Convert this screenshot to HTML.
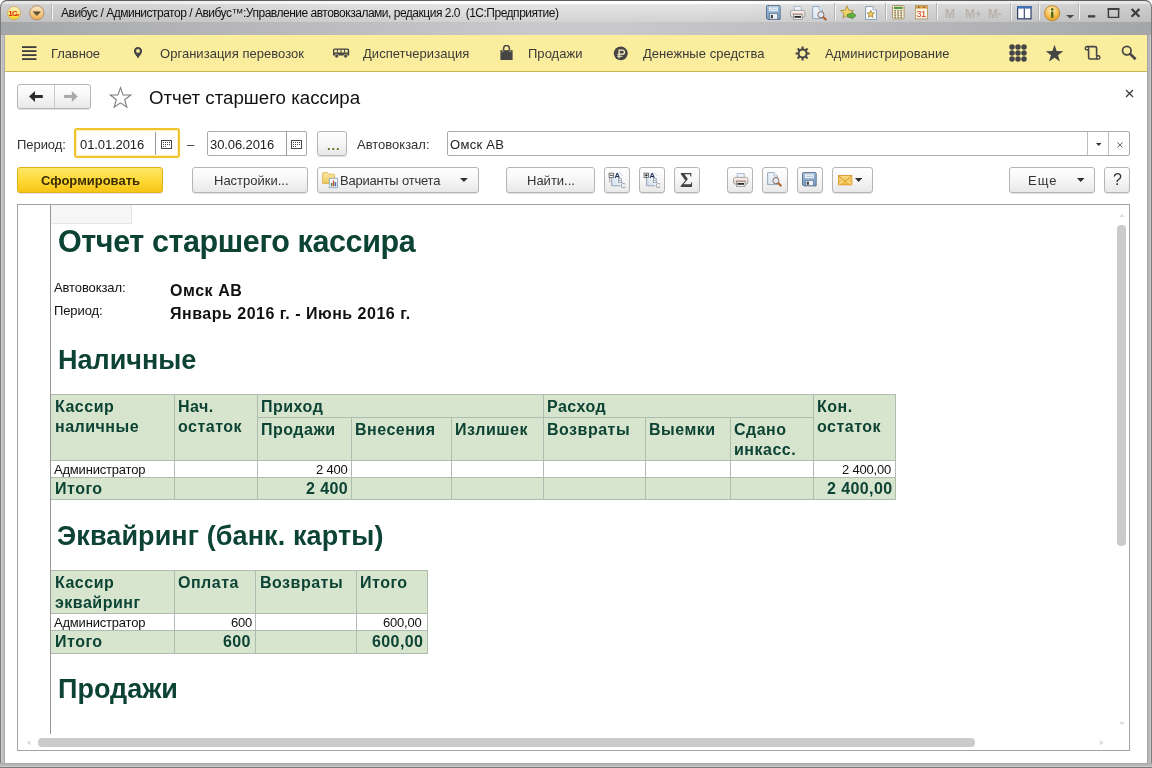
<!DOCTYPE html>
<html lang="ru">
<head>
<meta charset="utf-8">
<title>Отчет старшего кассира</title>
<style>
*{box-sizing:border-box;margin:0;padding:0}
html,body{width:1152px;height:768px;overflow:hidden;background:#fff}
body{font-family:"Liberation Sans",sans-serif;font-size:12px;color:#222;position:relative}
.abs{position:absolute}
svg{will-change:transform}
.t{position:absolute;white-space:nowrap;line-height:1;will-change:transform}
#frame{left:0;top:0;width:1152px;height:768px;background:#b9babc;border-radius:7px 7px 0 0}
#titlebar{left:0;top:0;width:1152px;height:35px;border-radius:7px 7px 0 0;border-top:1px solid #5e5e5e;border-left:1px solid #7c7c7c;border-right:1px solid #7c7c7c;
 background:linear-gradient(90deg,rgba(90,90,95,0.16) 0,rgba(90,90,95,0) 40%,rgba(90,90,95,0) 60%,rgba(90,90,95,0.16) 100%) 0 0/100% 21px no-repeat,linear-gradient(#ffffff 0,#ffffff 3px,#e5e5e5 3.5px,#d2d2d3 21px,rgba(210,210,211,0) 21px),linear-gradient(90deg,#a4a5a7 0,#adaeb0 8%,#c9c9cb 46%,#c9c9cb 54%,#adaeb0 92%,#a4a5a7 100%)}
#edgeL{left:0;top:35px;width:5px;height:733px;background:linear-gradient(90deg,#7a7a7a 0,#7a7a7a 1px,#cdcdcd 1px,#cdcdcd 2px,#bdbdbd 2px,#bdbdbd 4px,#adadad 4px,#adadad 5px)}
#edgeR{left:1147px;top:35px;width:5px;height:733px;background:linear-gradient(90deg,#a8a8a8 0,#a8a8a8 1px,#b7b7b9 1px,#b7b7b9 3px,#cbcbcd 3px,#cbcbcd 4px,#7a7a7c 4px,#7a7a7c 5px)}
#edgeB{left:0;top:763px;width:1152px;height:5px;background:linear-gradient(#a8a8a8 0,#a8a8a8 1px,#b7b7b9 1px,#b7b7b9 3px,#cbcbcd 3px,#cbcbcd 4px,#7a7a7c 4px,#7a7a7c 5px)}
#menubar{left:5px;top:35px;width:1142px;height:37px;background:#fbed9e;border-bottom:1px solid #c9b64f}
#content{left:5px;top:72px;width:1142px;height:691px;background:#fff}
.mi{color:#3a3a3a}
.inp{position:absolute;background:#fff;border:1px solid #a9a9a9;border-radius:2px}
.btn{position:absolute;border:1px solid #b5b5b5;border-radius:3px;background:linear-gradient(#ffffff,#f6f6f6 50%,#e8e8e8);box-shadow:0 1px 0 #e2e2e2}
.g{color:#0c4334;font-weight:bold}
.hc{position:absolute;background:#d7e5ce}
.ln{position:absolute;background:#aebdb0}
</style>
</head>
<body>
<div id="frame" class="abs"></div>
<div id="titlebar" class="abs"></div>
<div id="edgeL" class="abs"></div>
<div id="edgeR" class="abs"></div>
<div id="edgeB" class="abs"></div>
<div id="menubar" class="abs"></div>
<div id="content" class="abs"></div>
<!-- TITLEBAR -->
<div class="t" style="top:6px;font-size:12px;line-height:14px;left:61px;color:#111;letter-spacing:-0.49px;">Авибус / Администратор / Авибус™:Управление автовокзалами, редакция 2.0&nbsp; (1С:Предприятие)</div>
<!-- MENUBAR -->
<div class="t mi" style="top:46px;font-size:13px;line-height:15px;left:51px;letter-spacing:-0.1px;">Главное</div>
<div class="t mi" style="top:46px;font-size:13px;line-height:15px;left:160px;letter-spacing:0.03px;">Организация перевозок</div>
<div class="t mi" style="top:46px;font-size:13px;line-height:15px;left:363px;letter-spacing:0.03px;">Диспетчеризация</div>
<div class="t mi" style="top:46px;font-size:13px;line-height:15px;left:528px;letter-spacing:0.03px;">Продажи</div>
<div class="t mi" style="top:46px;font-size:13px;line-height:15px;left:643px;letter-spacing:0.03px;">Денежные средства</div>
<div class="t mi" style="top:46px;font-size:13px;line-height:15px;left:825px;letter-spacing:0.03px;">Администрирование</div>
<!-- HEADER -->
<div class="btn" style="left:17px;top:84px;width:74px;height:25px;border-radius:3px"></div>
<div class="abs" style="left:54px;top:85px;width:1px;height:23px;background:#c8c8c8"></div>
<div class="t" style="top:87px;font-size:18.7px;line-height:21px;left:149px;color:#111;">Отчет старшего кассира</div>
<svg class="abs" style="left:22px;top:45px" width="15" height="16" viewBox="0 0 15 16" preserveAspectRatio="none"><rect x="0" y="1.2" width="14.5" height="1.8" fill="#3d3d3d"/><rect x="0" y="5.2" width="14.5" height="1.8" fill="#3d3d3d"/><rect x="0" y="9.2" width="14.5" height="1.8" fill="#3d3d3d"/><rect x="0" y="13.2" width="14.5" height="1.8" fill="#3d3d3d"/></svg>
<svg class="abs" style="left:132px;top:46px" width="12" height="14" viewBox="0 0 12 14" preserveAspectRatio="none"><path fill-rule="evenodd" fill="#454545" d="M6 1 C3.6 1 1.9 2.8 1.9 5 C1.9 7.6 4.6 10 6 12.4 C7.4 10 10.1 7.6 10.1 5 C10.1 2.8 8.4 1 6 1 Z M6 3 A1.9 1.9 0 1 1 6 6.8 A1.9 1.9 0 1 1 6 3 Z"/></svg>
<svg class="abs" style="left:333px;top:48px" width="17" height="11" viewBox="0 0 17 11" preserveAspectRatio="none"><path fill="#454545" d="M1.6 0.4 H14.6 Q16.2 0.4 16.2 2 V7.6 H0 V2 Q0 0.4 1.6 0.4 Z"/><rect x="1.3" y="1.8" width="2.6" height="2.7" fill="#fbed9e"/><rect x="4.9" y="1.8" width="2.6" height="2.7" fill="#fbed9e"/><rect x="8.5" y="1.8" width="2.6" height="2.7" fill="#fbed9e"/><rect x="12.1" y="1.8" width="2.6" height="2.7" fill="#fbed9e"/><circle cx="3.6" cy="8" r="1.9" fill="#454545" stroke="#fbed9e" stroke-width="0.6"/><circle cx="12.6" cy="8" r="1.9" fill="#454545" stroke="#fbed9e" stroke-width="0.6"/></svg>
<svg class="abs" style="left:500px;top:44.6px" width="13" height="16" viewBox="0 0 13 16" preserveAspectRatio="none"><path fill="#454545" d="M0.4 5.2 H12.6 V15 H0.4 Z"/><path fill="none" stroke="#454545" stroke-width="1.5" d="M3.6 6 V3.4 A2.9 2.9 0 0 1 9.4 3.4 V6"/><path fill="none" stroke="#fbed9e" stroke-width="0.7" d="M2.9 5.2 V7.2 M10.1 5.2 V7.2"/></svg>
<svg class="abs" style="left:613.3px;top:45.5px" width="15" height="15" viewBox="0 0 15 15" preserveAspectRatio="none"><circle cx="7.75" cy="7.35" r="6.95" fill="#454545"/><path fill="none" stroke="#fdf4c6" stroke-width="1.25" d="M6.1 12.3 V4.1 H9.4 A2.05 2.05 0 0 1 9.4 8.2 H6.1"/><path fill="none" stroke="#fdf4c6" stroke-width="0.95" d="M4.2 8.3 H6.1 M4.2 10.3 H9.4"/></svg>
<svg class="abs" style="left:795.3px;top:45.5px" width="15.4" height="15.4" viewBox="0 0 15.4 15.4" preserveAspectRatio="none"><path fill-rule="evenodd" fill="#454545" d="M2.5999999999999996 7.55 a5 5 0 1 0 10 0 a5 5 0 1 0 -10 0 Z M4.55 7.55 a3.05 3.05 0 1 1 6.1 0 a3.05 3.05 0 1 1 -6.1 0 Z"/><rect x="6.55" y="0.5" width="2.1" height="2.8" rx="0.3" fill="#454545" transform="rotate(0 7.6 7.55)"/><rect x="6.55" y="0.5" width="2.1" height="2.8" rx="0.3" fill="#454545" transform="rotate(45 7.6 7.55)"/><rect x="6.55" y="0.5" width="2.1" height="2.8" rx="0.3" fill="#454545" transform="rotate(90 7.6 7.55)"/><rect x="6.55" y="0.5" width="2.1" height="2.8" rx="0.3" fill="#454545" transform="rotate(135 7.6 7.55)"/><rect x="6.55" y="0.5" width="2.1" height="2.8" rx="0.3" fill="#454545" transform="rotate(180 7.6 7.55)"/><rect x="6.55" y="0.5" width="2.1" height="2.8" rx="0.3" fill="#454545" transform="rotate(225 7.6 7.55)"/><rect x="6.55" y="0.5" width="2.1" height="2.8" rx="0.3" fill="#454545" transform="rotate(270 7.6 7.55)"/><rect x="6.55" y="0.5" width="2.1" height="2.8" rx="0.3" fill="#454545" transform="rotate(315 7.6 7.55)"/></svg>
<svg class="abs" style="left:1008.6px;top:43.6px" width="18" height="18" viewBox="0 0 18 18" preserveAspectRatio="none"><circle cx="3" cy="3" r="2.75" fill="#454545"/><circle cx="3" cy="9" r="2.75" fill="#454545"/><circle cx="3" cy="15" r="2.75" fill="#454545"/><circle cx="9" cy="3" r="2.75" fill="#454545"/><circle cx="9" cy="9" r="2.75" fill="#454545"/><circle cx="9" cy="15" r="2.75" fill="#454545"/><circle cx="15" cy="3" r="2.75" fill="#454545"/><circle cx="15" cy="9" r="2.75" fill="#454545"/><circle cx="15" cy="15" r="2.75" fill="#454545"/></svg>
<svg class="abs" style="left:1045px;top:44px" width="19" height="18" viewBox="0 0 19 18" preserveAspectRatio="none"><path fill="#454545" d="M9.50 0.80 L11.67 7.01 L18.25 7.16 L13.02 11.14 L14.91 17.44 L9.50 13.70 L4.09 17.44 L5.98 11.14 L0.75 7.16 L7.33 7.01 Z"/></svg>
<svg class="abs" style="left:1083.5px;top:44.5px" width="17" height="16" viewBox="0 0 17 16" preserveAspectRatio="none"><path fill="none" stroke="#454545" stroke-width="1.6" stroke-linejoin="round" d="M3.2 4.7 H4.6 V12.4 Q4.6 14 6.2 14 H14 M3.2 1.6 H11 Q12.6 1.6 12.6 3.2 V11"/><circle cx="3" cy="3.2" r="1.7" fill="none" stroke="#454545" stroke-width="1.4"/><circle cx="14.2" cy="12.4" r="1.7" fill="none" stroke="#454545" stroke-width="1.4"/></svg>
<svg class="abs" style="left:1120.5px;top:45.3px" width="16" height="16" viewBox="0 0 16 16" preserveAspectRatio="none"><circle cx="5.8" cy="5.6" r="4.3" fill="none" stroke="#454545" stroke-width="1.7"/><path stroke="#454545" stroke-width="2.6" stroke-linecap="butt" d="M9 8.8 L14.6 14.2"/></svg>
<svg class="abs" style="left:29.2px;top:91px" width="50" height="11" viewBox="0 0 50 11" preserveAspectRatio="none"><path fill="#2d2d2d" d="M0 5.5 L6 0 V3.9 H13.8 V7.1 H6 V11 Z"/><path fill="#a9a9a9" d="M48.8 5.5 L42.8 0 V3.9 H35 V7.1 H42.8 V11 Z"/></svg>
<svg class="abs" style="left:108px;top:85px" width="25" height="24" viewBox="0 0 25 24" preserveAspectRatio="none"><path fill="#fff" stroke="#7d7d7d" stroke-width="1.1" stroke-linejoin="miter" d="M12.50 2.60 L15.09 9.84 L22.77 10.06 L16.68 14.76 L18.85 22.14 L12.50 17.80 L6.15 22.14 L8.32 14.76 L2.23 10.06 L9.91 9.84 Z"/></svg>
<svg class="abs" style="left:1125px;top:89px" width="9" height="9" viewBox="0 0 9 9" preserveAspectRatio="none"><path stroke="#3a3a3a" stroke-width="1.25" d="M1 1 L8 8 M8 1 L1 8"/></svg>
<svg class="abs" style="left:6.9px;top:6px" width="14" height="14" viewBox="0 0 14 14" preserveAspectRatio="none"><defs><linearGradient id="c1g" x1="0" y1="0" x2="0" y2="1"><stop offset="0" stop-color="#fff6c0"/><stop offset="0.55" stop-color="#fbe878"/><stop offset="1" stop-color="#f5d800"/></linearGradient></defs><circle cx="7" cy="7" r="6.5" fill="url(#c1g)" stroke="#d6a75c" stroke-width="0.9"/><text x="1.6" y="9.5" font-family="Liberation Sans, sans-serif" font-size="7.4" font-weight="700" fill="#d81e05" letter-spacing="-0.7">1С</text><path stroke="#d81e05" stroke-width="1.2" d="M8.4 8.9 H12"/></svg>
<svg class="abs" style="left:29px;top:5.2px" width="16" height="16" viewBox="0 0 16 16" preserveAspectRatio="none"><defs><linearGradient id="tdg" x1="0" y1="0" x2="0" y2="1"><stop offset="0" stop-color="#fbe6c8"/><stop offset="0.5" stop-color="#f6cd90"/><stop offset="1" stop-color="#efab48"/></linearGradient><linearGradient id="tdt" x1="0" y1="0" x2="0" y2="1"><stop offset="0" stop-color="#4e4230"/><stop offset="1" stop-color="#8a6e3c"/></linearGradient></defs><circle cx="7.8" cy="7.8" r="7.1" fill="url(#tdg)" stroke="#ab8a62" stroke-width="0.9"/><path fill="url(#tdt)" d="M3.7 6.6 H11.9 L7.8 11.2 Z"/></svg>
<div class="abs" style="left:51px;top:3px;width:2px;height:17px;background:linear-gradient(90deg,#b4b4b4 50%,#f4f4f4 50%)"></div>
<svg class="abs" style="left:766px;top:5px" width="15" height="15" viewBox="0 0 15 14.5" preserveAspectRatio="none"><defs><linearGradient id="flgt" x1="0" y1="0" x2="0" y2="1"><stop offset="0" stop-color="#a3bedb"/><stop offset="1" stop-color="#7398c0"/></linearGradient></defs><path fill="url(#flgt)" stroke="#586f8a" stroke-width="0.9" d="M1.4 0.5 H13.2 Q14.2 0.5 14.2 1.5 V13.9 H1.6 L0.5 12.8 V1.5 Q0.5 0.5 1.4 0.5 Z"/><rect x="2.7" y="1.2" width="9.3" height="5.2" fill="#f0f5fa" stroke="#8aa5c2" stroke-width="0.5"/><path stroke="#9db6d2" stroke-width="0.7" d="M3.9 2.7 H10.8 M3.9 4.6 H10.8"/><rect x="3.6" y="8.4" width="7.8" height="5.3" fill="#eef0f3" stroke="#5b7189" stroke-width="0.6"/><rect x="4.8" y="9.6" width="2.1" height="3.2" fill="#3b4148"/></svg>
<svg class="abs" style="left:790px;top:6px" width="16" height="14" viewBox="0 0 16 14" preserveAspectRatio="none"><defs><linearGradient id="prgt" x1="0" y1="0" x2="0" y2="1"><stop offset="0" stop-color="#fbfaf9"/><stop offset="1" stop-color="#d9d5d1"/></linearGradient></defs><path fill="#eef4fb" stroke="#9db1c8" stroke-width="0.8" d="M4.2 0.5 H11.2 V5.4 H4.2 Z"/><rect x="0.5" y="4.4" width="14.4" height="6.8" rx="2" fill="url(#prgt)" stroke="#a3958d" stroke-width="0.9"/><rect x="2.2" y="6.9" width="11" height="1.1" fill="#e3b3a6"/><rect x="3.4" y="8.5" width="8.6" height="4.8" fill="#fdfdfd" stroke="#8d8580" stroke-width="0.8"/><rect x="4.4" y="9.9" width="6.6" height="1.9" fill="#2b2b2b"/></svg>
<svg class="abs" style="left:812.3px;top:5.6px" width="15.5" height="15" viewBox="0 0 15.5 15" preserveAspectRatio="none"><defs><linearGradient id="pvgt" x1="1" y1="0" x2="0" y2="1"><stop offset="0" stop-color="#ffffff"/><stop offset="1" stop-color="#d5e3f1"/></linearGradient></defs><path fill="url(#pvgt)" stroke="#8aa0ba" stroke-width="0.9" d="M0.6 0.6 H7 L10.4 4 V12.6 H0.6 Z"/><path fill="#f3f7fb" stroke="#8aa0ba" stroke-width="0.7" d="M7 0.6 V4 H10.4"/><circle cx="8.9" cy="8.7" r="3.1" fill="#dbe8f5" stroke="#8c6a55" stroke-width="1"/><path stroke="#b0602c" stroke-width="2.2" stroke-linecap="round" d="M11.6 11.5 L13.7 13.5"/></svg>
<div class="abs" style="left:834px;top:3px;width:2px;height:17px;background:linear-gradient(90deg,#b4b4b4 50%,#f4f4f4 50%)"></div>
<svg class="abs" style="left:840px;top:5px" width="17" height="15" viewBox="0 0 17 15" preserveAspectRatio="none"><path fill="#f3d36b" stroke="#a98f3f" stroke-width="0.9" d="M7.00 0.80 L8.76 5.17 L13.47 5.50 L9.85 8.53 L11.00 13.10 L7.00 10.60 L3.00 13.10 L4.15 8.53 L0.53 5.50 L5.24 5.17 Z"/><path fill="#5fb642" stroke="#3c7f28" stroke-width="0.7" d="M7.6 9 H12 V7.2 L16 10.6 L12 14 V12.2 H7.6 Z"/></svg>
<svg class="abs" style="left:865px;top:5.6px" width="12" height="14" viewBox="0 0 12 14" preserveAspectRatio="none"><path fill="#fafcfe" stroke="#7f95ae" stroke-width="0.9" d="M0.6 0.6 H8 L11.4 4 V13.4 H0.6 Z"/><path fill="#e6eef6" stroke="#7f95ae" stroke-width="0.7" d="M8 0.6 V4 H11.4"/><path fill="#f0cc62" stroke="#9a8238" stroke-width="0.8" d="M5.80 4.30 L6.80 6.82 L9.51 6.99 L7.42 8.73 L8.09 11.36 L5.80 9.90 L3.51 11.36 L4.18 8.73 L2.09 6.99 L4.80 6.82 Z"/></svg>
<div class="abs" style="left:885px;top:3px;width:2px;height:17px;background:linear-gradient(90deg,#b4b4b4 50%,#f4f4f4 50%)"></div>
<svg class="abs" style="left:892px;top:5.4px" width="13" height="14.5" viewBox="0 0 13 14.5" preserveAspectRatio="none"><rect x="0.5" y="0.5" width="11.6" height="13.4" rx="1" fill="#f4ead0" stroke="#a78f5f" stroke-width="0.9"/><rect x="2" y="1.8" width="8.6" height="2.2" fill="#4f9a3e"/><rect x="2.3" y="5.3" width="1.7" height="1" fill="#5d4d30"/><rect x="2.3" y="7.449999999999999" width="1.7" height="1" fill="#5d4d30"/><rect x="2.3" y="9.6" width="1.7" height="1" fill="#5d4d30"/><rect x="2.3" y="11.75" width="1.7" height="1" fill="#5d4d30"/><rect x="5.3" y="5.3" width="1.7" height="1" fill="#5d4d30"/><rect x="5.3" y="7.449999999999999" width="1.7" height="1" fill="#5d4d30"/><rect x="5.3" y="9.6" width="1.7" height="1" fill="#5d4d30"/><rect x="5.3" y="11.75" width="1.7" height="1" fill="#5d4d30"/><rect x="8.3" y="5.3" width="1.7" height="1" fill="#5d4d30"/><rect x="8.3" y="7.449999999999999" width="1.7" height="1" fill="#5d4d30"/><rect x="8.3" y="9.6" width="1.7" height="1" fill="#5d4d30"/><rect x="8.3" y="11.75" width="1.7" height="1" fill="#5d4d30"/></svg>
<svg class="abs" style="left:915px;top:5.4px" width="13" height="14.5" viewBox="0 0 13 14.5" preserveAspectRatio="none"><rect x="0.5" y="0.5" width="12" height="13.4" fill="#fdf6e6" stroke="#b59a62" stroke-width="0.9"/><rect x="1" y="1" width="11" height="2.6" fill="#d7a04c"/><rect x="3" y="1.6" width="1.4" height="1.2" fill="#7a4a16"/><rect x="8.6" y="1.6" width="1.4" height="1.2" fill="#7a4a16"/><text x="1.3" y="12.4" font-family="Liberation Sans, sans-serif" font-size="9.4" fill="#d33a1e" letter-spacing="-0.6">31</text></svg>
<div class="abs" style="left:936px;top:3px;width:2px;height:17px;background:linear-gradient(90deg,#b4b4b4 50%,#f4f4f4 50%)"></div>
<div class="t" style="top:7px;font-size:12px;line-height:14px;left:945px;font-weight:700;color:#b9b2aa;letter-spacing:-0.3px;">M</div>
<div class="t" style="top:7px;font-size:12px;line-height:14px;left:965px;font-weight:700;color:#b9b2aa;letter-spacing:-0.3px;">M+</div>
<div class="t" style="top:7px;font-size:12px;line-height:14px;left:988px;font-weight:700;color:#b9b2aa;letter-spacing:-0.3px;">M-</div>
<div class="abs" style="left:1010px;top:3px;width:2px;height:17px;background:linear-gradient(90deg,#b4b4b4 50%,#f4f4f4 50%)"></div>
<svg class="abs" style="left:1017.3px;top:6.2px" width="15" height="13.5" viewBox="0 0 15 13.5" preserveAspectRatio="none"><rect x="0.6" y="0.6" width="13.4" height="12.2" fill="#fff" stroke="#2a3f66" stroke-width="1.2"/><rect x="0" y="0" width="14.6" height="2.6" fill="#3f6fb3"/><path stroke="#2a3f66" stroke-width="1.1" d="M7.3 2.6 V12.8"/></svg>
<div class="abs" style="left:1038px;top:3px;width:2px;height:17px;background:linear-gradient(90deg,#b4b4b4 50%,#f4f4f4 50%)"></div>
<svg class="abs" style="left:1043.8px;top:4.8px" width="16.5" height="16.5" viewBox="0 0 16.5 16.5" preserveAspectRatio="none"><defs><radialGradient id="ing" cx="0.45" cy="0.3" r="0.8"><stop offset="0" stop-color="#fff0c8"/><stop offset="0.5" stop-color="#f6c052"/><stop offset="1" stop-color="#e39413"/></radialGradient></defs><circle cx="8.2" cy="8.2" r="7.6" fill="url(#ing)" stroke="#b98731" stroke-width="0.9"/><circle cx="8.2" cy="4.4" r="1.3" fill="#4c6a12"/><rect x="7" y="6.6" width="2.4" height="6.2" fill="#4c6a12"/></svg>
<svg class="abs" style="left:1066px;top:15px" width="8.2" height="4.1" viewBox="0 0 8.2 4.1" preserveAspectRatio="none"><path fill="#4a4a4a" d="M0 0 H8.2 L4.1 3.6 Z"/></svg>
<div class="abs" style="left:1078px;top:3px;width:2px;height:17px;background:linear-gradient(90deg,#b4b4b4 50%,#f4f4f4 50%)"></div>
<svg class="abs" style="left:1088px;top:7.8px" width="53" height="10" viewBox="0 0 53 10" preserveAspectRatio="none"><rect x="0" y="7.2" width="7.2" height="2.3" fill="#3e3e3e"/><rect x="20.4" y="0.9" width="10.2" height="8.6" fill="none" stroke="#3e3e3e" stroke-width="1.5"/><rect x="19.7" y="0" width="11.6" height="2" fill="#3e3e3e"/><path stroke="#3e3e3e" stroke-width="2.3" d="M43.6 1 L51.4 8.8 M51.4 1 L43.6 8.8"/></svg>
<!-- FORM -->
<div class="t" style="top:137px;font-size:13px;line-height:15px;left:17px;color:#333;letter-spacing:-0.05px;">Период:</div>
<div class="abs" style="left:74px;top:128px;width:106px;height:30px;border:2px solid #f1c42f;border-radius:3px;background:#fff;box-shadow:inset 0 0 0 1px #fff3c2"></div>
<div class="t" style="top:137px;font-size:13px;line-height:15px;left:80px;color:#222;letter-spacing:-0.1px;">01.01.2016</div>
<div class="abs" style="left:155px;top:132px;width:1px;height:23px;background:#9a9a9a"></div>
<svg class="abs" style="left:161px;top:140px" width="11" height="9" viewBox="0 0 11 9" preserveAspectRatio="none"><rect x="0.5" y="0.5" width="10" height="8" fill="#fff" stroke="#484848" stroke-width="1"/><rect x="2" y="2" width="1" height="1" fill="#484848"/><rect x="4" y="2" width="1" height="1" fill="#484848"/><rect x="6" y="2" width="1" height="1" fill="#484848"/><rect x="8" y="2" width="1" height="1" fill="#484848"/><rect x="2" y="4" width="1" height="1" fill="#484848"/><rect x="4" y="4" width="1" height="1" fill="#484848"/><rect x="6" y="4" width="1" height="1" fill="#484848"/><rect x="8" y="4" width="1" height="1" fill="#484848"/><rect x="2" y="6" width="1" height="1" fill="#484848"/><rect x="4" y="6" width="1" height="1" fill="#484848"/></svg>
<div class="t" style="top:137px;font-size:13px;line-height:15px;left:187px;color:#333;">–</div>
<div class="inp" style="left:207px;top:131px;width:100px;height:25px;"></div>
<div class="t" style="top:137px;font-size:13px;line-height:15px;left:210px;color:#222;letter-spacing:-0.1px;">30.06.2016</div>
<div class="abs" style="left:286px;top:132px;width:1px;height:23px;background:#9a9a9a"></div>
<svg class="abs" style="left:291px;top:140px" width="11" height="9" viewBox="0 0 11 9" preserveAspectRatio="none"><rect x="0.5" y="0.5" width="10" height="8" fill="#fff" stroke="#484848" stroke-width="1"/><rect x="2" y="2" width="1" height="1" fill="#484848"/><rect x="4" y="2" width="1" height="1" fill="#484848"/><rect x="6" y="2" width="1" height="1" fill="#484848"/><rect x="8" y="2" width="1" height="1" fill="#484848"/><rect x="2" y="4" width="1" height="1" fill="#484848"/><rect x="4" y="4" width="1" height="1" fill="#484848"/><rect x="6" y="4" width="1" height="1" fill="#484848"/><rect x="8" y="4" width="1" height="1" fill="#484848"/><rect x="2" y="6" width="1" height="1" fill="#484848"/><rect x="4" y="6" width="1" height="1" fill="#484848"/></svg>
<div class="btn" style="left:317px;top:131px;width:30px;height:25px;"></div>
<div class="t" style="top:138px;font-size:13px;line-height:15px;left:326.5px;font-weight:700;color:#6b6b1e;letter-spacing:0.9px;">...</div>
<div class="t" style="top:137px;font-size:13px;line-height:15px;left:357px;color:#333;">Автовокзал:</div>
<div class="inp" style="left:447px;top:131px;width:683px;height:25px;"></div>
<div class="t" style="top:137px;font-size:13px;line-height:15px;left:450px;color:#222;letter-spacing:0.3px;">Омск АВ</div>
<div class="abs" style="left:1087px;top:132px;width:1px;height:23px;background:#bdbdbd"></div>
<div class="abs" style="left:1108px;top:132px;width:1px;height:23px;background:#bdbdbd"></div>
<svg class="abs" style="left:1096px;top:143px" width="5.4" height="3.5" viewBox="0 0 5.4 3.5" preserveAspectRatio="none"><path fill="#333" d="M0 0 H5.4 L2.7 3 Z"/></svg>
<svg class="abs" style="left:1116.5px;top:141.8px" width="6" height="6" viewBox="0 0 6 6" preserveAspectRatio="none"><path stroke="#555" stroke-width="0.9" d="M0.4 0.4 L5.6 5.6 M5.6 0.4 L0.4 5.6"/></svg>
<div class="abs" style="left:17px;top:167px;width:146px;height:26px;border:1px solid #e0b01c;border-radius:3px;background:linear-gradient(#ffe868,#fdd835 55%,#f6c414);box-shadow:0 1px 0 #e5e5e5"></div>
<div class="t" style="top:173px;font-size:13px;line-height:15px;left:41px;font-weight:700;color:#3b2d00;">Сформировать</div>
<div class="btn" style="left:192px;top:167px;width:116px;height:26px;"></div>
<div class="t" style="top:173px;font-size:13px;line-height:15px;left:213.5px;color:#333;">Настройки...</div>
<div class="btn" style="left:317px;top:167px;width:162px;height:26px;"></div>
<div class="t" style="top:173px;font-size:13px;line-height:15px;left:340px;color:#333;letter-spacing:-0.2px;">Варианты отчета</div>
<svg class="abs" style="left:322px;top:171.6px" width="17" height="17" viewBox="0 0 17 17" preserveAspectRatio="none"><defs><linearGradient id="fg" x1="0" y1="0" x2="0" y2="1"><stop offset="0" stop-color="#fbe9a3"/><stop offset="1" stop-color="#efc95a"/></linearGradient></defs><path fill="url(#fg)" stroke="#d6ae45" stroke-width="0.8" d="M0.6 1.6 Q0.6 0.6 1.6 0.6 H5.2 L6.6 2.2 H11.6 Q12.6 2.2 12.6 3.2 V11.4 H0.6 Z"/><rect x="7.3" y="6.3" width="8.2" height="9.4" fill="#f4f8fc" stroke="#8fa6c0" stroke-width="0.9"/><rect x="8.9" y="11" width="1.5" height="3.3" fill="#4e8a3c"/><rect x="10.8" y="8.6" width="1.5" height="5.7" fill="#d0462f"/><rect x="12.7" y="10.2" width="1.5" height="4.1" fill="#3e6fb5"/></svg>
<svg class="abs" style="left:460.3px;top:178.3px" width="7.8" height="4.5" viewBox="0 0 7.8 4.5" preserveAspectRatio="none"><path fill="#2e2e2e" d="M0 0 H7.8 L3.9 4 Z"/></svg>
<div class="btn" style="left:506px;top:167px;width:89px;height:26px;"></div>
<div class="t" style="top:173px;font-size:13px;line-height:15px;left:527px;color:#333;">Найти...</div>
<div class="btn" style="left:604px;top:167px;width:26px;height:26px;"></div>
<div class="btn" style="left:639px;top:167px;width:26px;height:26px;"></div>
<div class="btn" style="left:674px;top:167px;width:26px;height:26px;"></div>
<div class="btn" style="left:727px;top:167px;width:26px;height:26px;"></div>
<div class="btn" style="left:762px;top:167px;width:26px;height:26px;"></div>
<div class="btn" style="left:797px;top:167px;width:26px;height:26px;"></div>
<svg class="abs" style="left:608px;top:171px" width="19" height="18" viewBox="0 0 19 18" preserveAspectRatio="none"><defs><linearGradient id="pg0" x1="1" y1="0" x2="0" y2="1"><stop offset="0" stop-color="#fbfdff"/><stop offset="1" stop-color="#cfdfee"/></linearGradient></defs><path fill="url(#pg0)" d="M3.6 1.2 H11 L14.6 4.8 V14.8 H3.6 Z"/><path fill="none" stroke="#8c9db2" stroke-width="0.9" d="M3.6 6.4 V14.8 H12"/><path fill="none" stroke="#c3d0de" stroke-width="0.8" d="M11 1.2 L14.6 4.8"/><rect x="1.1" y="2.2" width="4.4" height="4.2" fill="#fff" stroke="#555" stroke-width="0.8"/><path stroke="#222" stroke-width="0.9" d="M1.8 4.3 H4.8"/><path stroke="#8a8a8a" stroke-width="0.8" fill="none" d="M1.7 6.6 V11.4"/><text x="6.5" y="6.9" font-family="Liberation Sans, sans-serif" font-size="7.6" font-weight="700" fill="#1b2f4f">A</text><text x="9.7" y="12.3" font-family="Liberation Sans, sans-serif" font-size="7" fill="#7f858c">B</text><text x="12.6" y="17" font-family="Liberation Sans, sans-serif" font-size="7" fill="#7f858c">C</text></svg>
<svg class="abs" style="left:643px;top:171px" width="19" height="18" viewBox="0 0 19 18" preserveAspectRatio="none"><defs><linearGradient id="pg1" x1="1" y1="0" x2="0" y2="1"><stop offset="0" stop-color="#fbfdff"/><stop offset="1" stop-color="#cfdfee"/></linearGradient></defs><path fill="url(#pg1)" d="M3.6 1.2 H11 L14.6 4.8 V14.8 H3.6 Z"/><path fill="none" stroke="#8c9db2" stroke-width="0.9" d="M3.6 6.4 V14.8 H12"/><path fill="none" stroke="#c3d0de" stroke-width="0.8" d="M11 1.2 L14.6 4.8"/><rect x="1.1" y="2.2" width="4.4" height="4.2" fill="#fff" stroke="#555" stroke-width="0.8"/><path stroke="#222" stroke-width="0.9" d="M1.8 4.3 H4.8"/><path stroke="#222" stroke-width="0.9" d="M3.3 2.9 V5.7"/><text x="6.5" y="6.9" font-family="Liberation Sans, sans-serif" font-size="7.6" font-weight="700" fill="#1b2f4f">A</text><text x="9.7" y="12.3" font-family="Liberation Sans, sans-serif" font-size="7" fill="#7f858c">B</text><text x="12.6" y="17" font-family="Liberation Sans, sans-serif" font-size="7" fill="#7f858c">C</text></svg>
<div class="t" style="top:169px;font-size:20px;line-height:22px;left:680px;font-weight:700;color:#444;font-family:'Liberation Serif',serif;">Σ</div>
<svg class="abs" style="left:733px;top:172.8px" width="16" height="14" viewBox="0 0 16 14" preserveAspectRatio="none"><defs><linearGradient id="prg" x1="0" y1="0" x2="0" y2="1"><stop offset="0" stop-color="#fbfaf9"/><stop offset="1" stop-color="#d9d5d1"/></linearGradient></defs><path fill="#eef4fb" stroke="#9db1c8" stroke-width="0.8" d="M4.2 0.5 H11.2 V5.4 H4.2 Z"/><rect x="0.5" y="4.4" width="14.4" height="6.8" rx="2" fill="url(#prg)" stroke="#a3958d" stroke-width="0.9"/><rect x="2.2" y="6.9" width="11" height="1.1" fill="#e3b3a6"/><rect x="3.4" y="8.5" width="8.6" height="4.8" fill="#fdfdfd" stroke="#8d8580" stroke-width="0.8"/><rect x="4.4" y="9.9" width="6.6" height="1.9" fill="#2b2b2b"/></svg>
<svg class="abs" style="left:767px;top:172px" width="15.5" height="15" viewBox="0 0 15.5 15" preserveAspectRatio="none"><defs><linearGradient id="pvg" x1="1" y1="0" x2="0" y2="1"><stop offset="0" stop-color="#ffffff"/><stop offset="1" stop-color="#d5e3f1"/></linearGradient></defs><path fill="url(#pvg)" stroke="#8aa0ba" stroke-width="0.9" d="M0.6 0.6 H7 L10.4 4 V12.6 H0.6 Z"/><path fill="#f3f7fb" stroke="#8aa0ba" stroke-width="0.7" d="M7 0.6 V4 H10.4"/><circle cx="8.9" cy="8.7" r="3.1" fill="#dbe8f5" stroke="#8c6a55" stroke-width="1"/><path stroke="#b0602c" stroke-width="2.2" stroke-linecap="round" d="M11.6 11.5 L13.7 13.5"/></svg>
<svg class="abs" style="left:802px;top:172px" width="15" height="14.5" viewBox="0 0 15 14.5" preserveAspectRatio="none"><defs><linearGradient id="flg" x1="0" y1="0" x2="0" y2="1"><stop offset="0" stop-color="#a3bedb"/><stop offset="1" stop-color="#7398c0"/></linearGradient></defs><path fill="url(#flg)" stroke="#586f8a" stroke-width="0.9" d="M1.4 0.5 H13.2 Q14.2 0.5 14.2 1.5 V13.9 H1.6 L0.5 12.8 V1.5 Q0.5 0.5 1.4 0.5 Z"/><rect x="2.7" y="1.2" width="9.3" height="5.2" fill="#f0f5fa" stroke="#8aa5c2" stroke-width="0.5"/><path stroke="#9db6d2" stroke-width="0.7" d="M3.9 2.7 H10.8 M3.9 4.6 H10.8"/><rect x="3.6" y="8.4" width="7.8" height="5.3" fill="#eef0f3" stroke="#5b7189" stroke-width="0.6"/><rect x="4.8" y="9.6" width="2.1" height="3.2" fill="#3b4148"/></svg>
<div class="btn" style="left:832px;top:167px;width:41px;height:26px;"></div>
<svg class="abs" style="left:838px;top:175px" width="14.5" height="10.5" viewBox="0 0 14.5 10.5" preserveAspectRatio="none"><defs><linearGradient id="mlg" x1="0" y1="0" x2="0" y2="1"><stop offset="0" stop-color="#fbdc85"/><stop offset="1" stop-color="#f0b53c"/></linearGradient></defs><rect x="0.5" y="0.5" width="13.4" height="9.4" fill="url(#mlg)" stroke="#d99a2a" stroke-width="0.9"/><path fill="none" stroke="#fff3cf" stroke-width="0.9" d="M1 9.4 L5.6 5.2 M13.4 9.4 L8.8 5.2"/><path fill="none" stroke="#c98a1e" stroke-width="0.9" d="M1 1 L7.2 6.6 L13.4 1"/></svg>
<svg class="abs" style="left:855px;top:178px" width="7.2" height="4.4" viewBox="0 0 7.2 4.4" preserveAspectRatio="none"><path fill="#2e2e2e" d="M0 0 H7.2 L3.6 3.9 Z"/></svg>
<div class="btn" style="left:1009px;top:167px;width:86px;height:26px;"></div>
<div class="t" style="top:173px;font-size:13px;line-height:15px;left:1028px;color:#333;letter-spacing:1px;">Еще</div>
<svg class="abs" style="left:1077px;top:178.2px" width="7.4" height="4.5" viewBox="0 0 7.4 4.5" preserveAspectRatio="none"><path fill="#2e2e2e" d="M0 0 H7.4 L3.7 4 Z"/></svg>
<div class="btn" style="left:1104px;top:167px;width:26px;height:26px;"></div>
<div class="t" style="top:171px;font-size:16px;line-height:17px;left:1113px;color:#333;">?</div>
<!-- REPORT -->
<div class="abs" style="left:17px;top:204px;width:1113px;height:547px;border:1px solid #a3a3a3;background:#fff"></div>
<div class="abs" style="left:50px;top:205px;width:1px;height:529px;background:#959595"></div>
<div class="abs" style="left:51px;top:205px;width:81px;height:19px;background:#f6f6f6;border-right:1px solid #e6e6e6;border-bottom:1px solid #e6e6e6"></div>
<div class="t" style="top:224px;font-size:30.5px;line-height:34px;left:58px;font-weight:700;color:#0c4334;letter-spacing:-0.4px;">Отчет старшего кассира</div>
<div class="t" style="top:280px;font-size:13px;line-height:15px;left:54px;color:#111;letter-spacing:-0.1px;">Автовокзал:</div>
<div class="t" style="top:282px;font-size:16px;line-height:17px;left:170px;font-weight:700;color:#111;letter-spacing:0.55px;">Омск АВ</div>
<div class="t" style="top:303px;font-size:13px;line-height:15px;left:54px;color:#111;letter-spacing:-0.1px;">Период:</div>
<div class="t" style="top:305px;font-size:16px;line-height:17px;left:170px;font-weight:700;color:#111;letter-spacing:0.5px;">Январь 2016 г. - Июнь 2016 г.</div>
<div class="t" style="top:345px;font-size:27px;line-height:30px;left:58px;font-weight:700;color:#0c4334;">Наличные</div>
<div class="t" style="top:521px;font-size:27px;line-height:30px;left:57px;font-weight:700;color:#0c4334;letter-spacing:0.1px;">Эквайринг (банк. карты)</div>
<div class="t" style="top:674px;font-size:27px;line-height:30px;left:58px;font-weight:700;color:#0c4334;">Продажи</div>
<div class="hc" style="left:51px;top:394px;width:844px;height:66px;"></div>
<div class="hc" style="left:51px;top:477px;width:844px;height:22px;"></div>
<div class="ln" style="left:174px;top:394px;width:1px;height:106px;"></div>
<div class="ln" style="left:257px;top:394px;width:1px;height:106px;"></div>
<div class="ln" style="left:351px;top:417px;width:1px;height:83px;"></div>
<div class="ln" style="left:451px;top:417px;width:1px;height:83px;"></div>
<div class="ln" style="left:543px;top:394px;width:1px;height:106px;"></div>
<div class="ln" style="left:645px;top:417px;width:1px;height:83px;"></div>
<div class="ln" style="left:730px;top:417px;width:1px;height:83px;"></div>
<div class="ln" style="left:813px;top:394px;width:1px;height:106px;"></div>
<div class="ln" style="left:895px;top:394px;width:1px;height:106px;"></div>
<div class="ln" style="left:51px;top:394px;width:845px;height:1px;"></div>
<div class="ln" style="left:257px;top:417px;width:557px;height:1px;"></div>
<div class="ln" style="left:51px;top:460px;width:845px;height:1px;"></div>
<div class="ln" style="left:51px;top:477px;width:845px;height:1px;"></div>
<div class="ln" style="left:51px;top:499px;width:845px;height:1px;"></div>
<div class="t" style="top:398px;font-size:16px;line-height:17px;left:55px;font-weight:700;color:#0c4334;letter-spacing:0.5px;">Кассир</div>
<div class="t" style="top:418px;font-size:16px;line-height:17px;left:55px;font-weight:700;color:#0c4334;letter-spacing:0.5px;">наличные</div>
<div class="t" style="top:398px;font-size:16px;line-height:17px;left:178px;font-weight:700;color:#0c4334;letter-spacing:0.5px;">Нач.</div>
<div class="t" style="top:418px;font-size:16px;line-height:17px;left:178px;font-weight:700;color:#0c4334;letter-spacing:0.5px;">остаток</div>
<div class="t" style="top:398px;font-size:16px;line-height:17px;left:261px;font-weight:700;color:#0c4334;letter-spacing:0.5px;">Приход</div>
<div class="t" style="top:421px;font-size:16px;line-height:17px;left:261px;font-weight:700;color:#0c4334;letter-spacing:0.5px;">Продажи</div>
<div class="t" style="top:421px;font-size:16px;line-height:17px;left:355px;font-weight:700;color:#0c4334;letter-spacing:0.5px;">Внесения</div>
<div class="t" style="top:421px;font-size:16px;line-height:17px;left:455px;font-weight:700;color:#0c4334;letter-spacing:0.5px;">Излишек</div>
<div class="t" style="top:398px;font-size:16px;line-height:17px;left:547px;font-weight:700;color:#0c4334;letter-spacing:0.5px;">Расход</div>
<div class="t" style="top:421px;font-size:16px;line-height:17px;left:547px;font-weight:700;color:#0c4334;letter-spacing:0.5px;">Возвраты</div>
<div class="t" style="top:421px;font-size:16px;line-height:17px;left:649px;font-weight:700;color:#0c4334;letter-spacing:0.5px;">Выемки</div>
<div class="t" style="top:421px;font-size:16px;line-height:17px;left:734px;font-weight:700;color:#0c4334;letter-spacing:0.5px;">Сдано</div>
<div class="t" style="top:441px;font-size:16px;line-height:17px;left:734px;font-weight:700;color:#0c4334;letter-spacing:0.5px;">инкасс.</div>
<div class="t" style="top:398px;font-size:16px;line-height:17px;left:817px;font-weight:700;color:#0c4334;letter-spacing:0.5px;">Кон.</div>
<div class="t" style="top:418px;font-size:16px;line-height:17px;left:817px;font-weight:700;color:#0c4334;letter-spacing:0.5px;">остаток</div>
<div class="t" style="top:462px;font-size:13px;line-height:15px;left:54px;color:#111;letter-spacing:-0.2px;">Администратор</div>
<div class="t" style="top:462px;font-size:13px;line-height:15px;right:804px;color:#111;letter-spacing:-0.2px;">2 400</div>
<div class="t" style="top:462px;font-size:13px;line-height:15px;right:261px;color:#111;letter-spacing:-0.2px;">2 400,00</div>
<div class="t" style="top:480px;font-size:16px;line-height:17px;left:55px;font-weight:700;color:#0c4334;letter-spacing:0.5px;">Итого</div>
<div class="t" style="top:480px;font-size:16px;line-height:17px;right:804px;font-weight:700;color:#0c4334;letter-spacing:0.4px;">2 400</div>
<div class="t" style="top:480px;font-size:16px;line-height:17px;right:260px;font-weight:700;color:#0c4334;letter-spacing:0.4px;">2 400,00</div>
<div class="hc" style="left:51px;top:570px;width:376px;height:43px;"></div>
<div class="hc" style="left:51px;top:630px;width:376px;height:23px;"></div>
<div class="ln" style="left:174px;top:570px;width:1px;height:84px;"></div>
<div class="ln" style="left:255px;top:570px;width:1px;height:84px;"></div>
<div class="ln" style="left:356px;top:570px;width:1px;height:84px;"></div>
<div class="ln" style="left:427px;top:570px;width:1px;height:84px;"></div>
<div class="ln" style="left:51px;top:570px;width:377px;height:1px;"></div>
<div class="ln" style="left:51px;top:613px;width:377px;height:1px;"></div>
<div class="ln" style="left:51px;top:630px;width:377px;height:1px;"></div>
<div class="ln" style="left:51px;top:653px;width:377px;height:1px;"></div>
<div class="t" style="top:574px;font-size:16px;line-height:17px;left:55px;font-weight:700;color:#0c4334;letter-spacing:0.5px;">Кассир</div>
<div class="t" style="top:594px;font-size:16px;line-height:17px;left:55px;font-weight:700;color:#0c4334;letter-spacing:0.5px;">эквайринг</div>
<div class="t" style="top:574px;font-size:16px;line-height:17px;left:178px;font-weight:700;color:#0c4334;letter-spacing:0.5px;">Оплата</div>
<div class="t" style="top:574px;font-size:16px;line-height:17px;left:260px;font-weight:700;color:#0c4334;letter-spacing:0.5px;">Возвраты</div>
<div class="t" style="top:574px;font-size:16px;line-height:17px;left:360px;font-weight:700;color:#0c4334;letter-spacing:0.5px;">Итого</div>
<div class="t" style="top:615px;font-size:13px;line-height:15px;left:54px;color:#111;letter-spacing:-0.2px;">Администратор</div>
<div class="t" style="top:615px;font-size:13px;line-height:15px;right:900px;color:#111;letter-spacing:-0.2px;">600</div>
<div class="t" style="top:615px;font-size:13px;line-height:15px;right:730px;color:#111;letter-spacing:-0.2px;">600,00</div>
<div class="t" style="top:633px;font-size:16px;line-height:17px;left:55px;font-weight:700;color:#0c4334;letter-spacing:0.5px;">Итого</div>
<div class="t" style="top:633px;font-size:16px;line-height:17px;right:901px;font-weight:700;color:#0c4334;letter-spacing:0.4px;">600</div>
<div class="t" style="top:633px;font-size:16px;line-height:17px;right:729px;font-weight:700;color:#0c4334;letter-spacing:0.4px;">600,00</div>
<div class="abs" style="left:1117px;top:225px;width:9px;height:321px;background:#cbcbcb;border-radius:4px"></div>
<div class="abs" style="left:38px;top:738px;width:937px;height:9px;background:#cbcbcb;border-radius:4px"></div>
<svg class="abs" style="left:1118.5px;top:213.8px" width="6" height="3.4" viewBox="0 0 6 3.4" preserveAspectRatio="none"><path fill="#dadada" d="M0 3.2 L2.8 0 L5.6 3.2 Z"/></svg>
<svg class="abs" style="left:1118.5px;top:721.8px" width="6" height="3.4" viewBox="0 0 6 3.4" preserveAspectRatio="none"><path fill="#dadada" d="M0 0 H5.6 L2.8 3.2 Z"/></svg>
<svg class="abs" style="left:26.8px;top:740px" width="3.6" height="6" viewBox="0 0 3.6 6" preserveAspectRatio="none"><path fill="#dadada" d="M3.4 0 V5.4 L0 2.7 Z"/></svg>
<svg class="abs" style="left:1100px;top:740px" width="3.6" height="6" viewBox="0 0 3.6 6" preserveAspectRatio="none"><path fill="#dadada" d="M0 0 V5.4 L3.4 2.7 Z"/></svg>
</body>
</html>
